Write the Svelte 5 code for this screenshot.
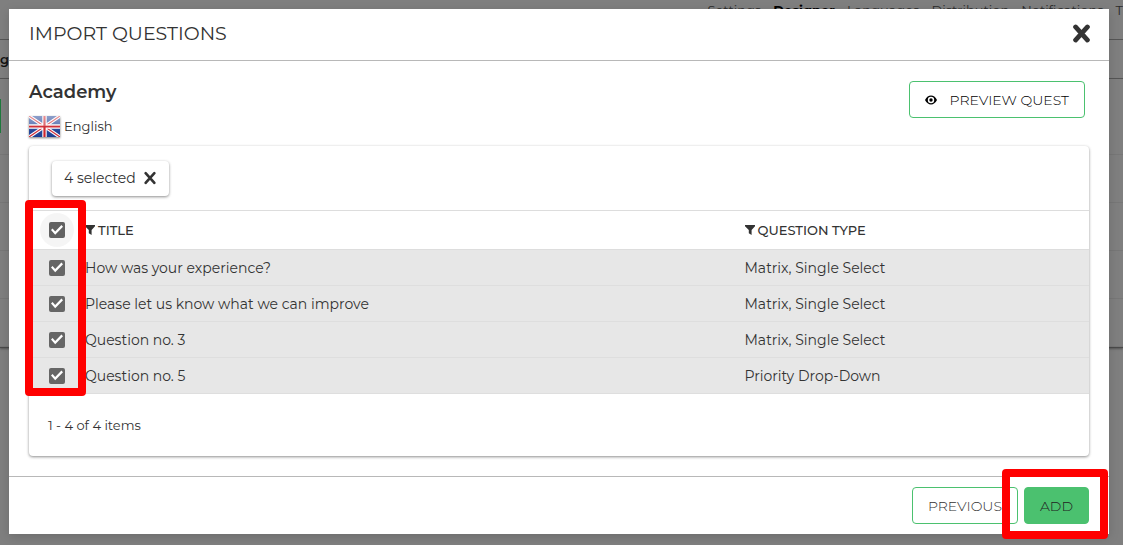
<script>
  const navLinks = ['Settings', 'Designer', 'Languages', 'Distribution', 'Notifications', 'T'];

  let questions = $state([
    { id: 1, title: 'How was your experience?', type: 'Matrix, Single Select', checked: true },
    { id: 2, title: 'Please let us know what we can improve', type: 'Matrix, Single Select', checked: true },
    { id: 3, title: 'Question no. 3', type: 'Matrix, Single Select', checked: true },
    { id: 4, title: 'Question no. 5', type: 'Priority Drop-Down', checked: true }
  ]);

  let selected = $derived(questions.filter((q) => q.checked).length);

  function setAll(checked) {
    questions.forEach((q) => (q.checked = checked));
  }
</script>

{#snippet cross()}
  <svg class="cross" viewBox="0 0 16 16" aria-hidden="true">
    <path d="M3 2.5 L13 13.5 M13 2.5 L3 13.5" />
  </svg>
{/snippet}

{#snippet funnel()}
  <svg class="funnel" viewBox="0 0 10 10" aria-hidden="true">
    <path d="M0 0h10v1.3L6.6 5v5L3.8 8.3V5L0 1.3z" />
  </svg>
{/snippet}

<div class="page">
  <div class="behind" aria-hidden="true">
    <div class="nav">
      {#each navLinks as link}
        <span class:current={link === 'Designer'}>{link}</span>
      {/each}
    </div>
    <div class="subnav">gn</div>
    <div class="panel">
      <div class="panel-head"><i></i></div>
      <div class="panel-row"></div>
      <div class="panel-row"></div>
      <div class="panel-row"></div>
      <div class="panel-row"></div>
    </div>
  </div>

  <div class="overlay">
    <div class="modal" role="dialog" aria-labelledby="modal-title">
      <header>
        <h1 id="modal-title">IMPORT QUESTIONS</h1>
        <button class="close" aria-label="Close">{@render cross()}</button>
      </header>

      <main>
        <div class="intro">
          <div>
            <h2>Academy</h2>
            <div class="language">
              <svg class="flag" viewBox="0 0 31 21" aria-hidden="true">
                <defs>
                  <linearGradient id="shine" x1="0" y1="0" x2="0" y2="1">
                    <stop offset="0" stop-color="#fff" stop-opacity="0.5" />
                    <stop offset="0.5" stop-color="#fff" stop-opacity="0.3" />
                    <stop offset="0.5" stop-color="#fff" stop-opacity="0.08" />
                    <stop offset="1" stop-color="#fff" stop-opacity="0" />
                  </linearGradient>
                </defs>
                <rect width="31" height="21" fill="#1c3f95" />
                <path d="M0 0L31 21M31 0L0 21" stroke="#fff" stroke-width="3.4" />
                <path d="M0 0L31 21M31 0L0 21" stroke="#cf2b36" stroke-width="1.2" />
                <path d="M15.5 0V21M0 10.5H31" stroke="#fff" stroke-width="4.4" />
                <path d="M15.5 0V21M0 10.5H31" stroke="#cc2029" stroke-width="2.2" />
                <rect width="31" height="21" fill="url(#shine)" />
              </svg>
              <span>English</span>
            </div>
          </div>
          <button class="btn preview">
            <svg class="eye" viewBox="0 0 12 10" aria-hidden="true">
              <path d="M0 5C1.5 2 3.6 .6 6 .6S10.5 2 12 5C10.5 8 8.4 9.4 6 9.4S1.5 8 0 5z" />
              <circle cx="6" cy="5" r="3.2" fill="#fff" />
              <circle cx="6" cy="5" r="1.7" />
            </svg>
            PREVIEW QUEST
          </button>
        </div>

        <section class="card">
          <div class="toolbar">
            <button class="chip" onclick={() => setAll(false)}>
              {selected} selected
              {@render cross()}
            </button>
          </div>
          <div class="table-wrap">
            <table>
              <thead>
                <tr>
                  <th class="pick">
                    <input
                      type="checkbox"
                      aria-label="Select all"
                      checked={selected === questions.length}
                      onchange={(e) => setAll(e.currentTarget.checked)}
                    />
                  </th>
                  <th>{@render funnel()}TITLE</th>
                  <th class="type">{@render funnel()}QUESTION TYPE</th>
                </tr>
              </thead>
              <tbody>
                {#each questions as q (q.id)}
                  <tr class:checked={q.checked}>
                    <td class="pick"><input type="checkbox" aria-label={q.title} bind:checked={q.checked} /></td>
                    <td>{q.title}</td>
                    <td>{q.type}</td>
                  </tr>
                {/each}
              </tbody>
            </table>
            <div class="marker rows-marker"></div>
          </div>
          <div class="pager">1 - 4 of 4 items</div>
        </section>
      </main>

      <footer>
        <button class="btn">PREVIOUS</button>
        <div class="add-wrap">
          <button class="btn primary">ADD</button>
          <div class="marker add-marker"></div>
        </div>
      </footer>
    </div>
  </div>
</div>

<style>
  :global(body) {
    background: #fff;
    font-family: Montserrat, Inter, sans-serif;
    font-size: 14px;
    color: #333;
  }
  .page {
    position: relative;
    min-height: 100vh;
    margin-right: 23px;
    background: #7f7f7f;
    overflow: hidden;
  }
  .page * { box-sizing: border-box; }

  .behind { position: absolute; inset: 0; overflow: hidden; }
  .nav {
    height: 40px;
    padding-top: 2px;
    display: flex;
    justify-content: flex-end;
    gap: 12px;
    font-size: 13px;
    line-height: 16px;
    color: #2b2b2b;
    border-bottom: 1px solid #555;
  }
  .nav .current { color: #000; font-weight: 700; }
  .subnav {
    height: 39px;
    font-size: 13px;
    line-height: 38px;
    font-weight: 600;
    color: #111;
    border-bottom: 1px solid #555;
  }
  .panel { border-bottom: 1px solid #4a4a4a; box-shadow: 0 1px 2px #555; }
  .panel-head { height: 76px; padding-top: 20px; border-bottom: 1px solid #777; }
  .panel-head i { display: block; width: 1px; height: 34px; background: #1f7a3d; }
  .panel-row { height: 48px; border-bottom: 1px solid #777; }

  .overlay { position: relative; padding: 9px 14px 11px 9px; }
  .modal { background: #fff; box-shadow: 0 3px 10px rgba(0, 0, 0, 0.15); }

  header {
    display: flex;
    align-items: center;
    justify-content: space-between;
    height: 52px;
    padding: 0 18px 2px 20px;
    border-bottom: 1px solid #b8b8b8;
  }
  h1 { margin: 0; font-size: 19px; line-height: 24px; font-weight: 400; }
  h2 { margin: 0; font-size: 18px; line-height: 22px; font-weight: 600; }
  button { font: inherit; color: inherit; cursor: pointer; }
  .cross { width: 14px; height: 14px; fill: none; stroke: #333; stroke-width: 3; stroke-linecap: round; }
  .close { display: flex; padding: 0; border: 0; background: none; }
  .close .cross { width: 19px; height: 19px; stroke-width: 4; }

  main { padding: 20px; }
  .intro { display: flex; justify-content: space-between; align-items: flex-start; padding-right: 4px; }
  .language { display: flex; align-items: center; gap: 4px; height: 22px; margin: 12px 0 9px; font-size: 13px; }
  .flag { width: 31px; height: 21px; filter: drop-shadow(0 1px 1px rgba(0, 0, 0, 0.5)); }

  .btn {
    display: flex;
    align-items: center;
    justify-content: center;
    height: 37px;
    padding: 0 15px;
    border: 1px solid #4bc16f;
    border-radius: 4px;
    background: #fff;
    font-size: 14px;
    font-weight: 300;
  }
  .preview { gap: 13px; color: #000; }
  .eye { width: 12px; height: 10px; }
  .primary { background: #4bc16f; color: #222; }

  .card {
    border-radius: 4px;
    box-shadow: 0 1px 3px rgba(0, 0, 0, 0.45);
  }
  .toolbar { display: flex; padding: 15px 23px 14px; }
  .chip {
    display: flex;
    align-items: center;
    gap: 7px;
    height: 35px;
    padding: 0 12px 2px;
    border: 0;
    border-radius: 4px;
    background: #fff;
    box-shadow: 0 1px 3px rgba(0, 0, 0, 0.45);
  }

  .table-wrap { position: relative; }
  table { width: 100%; border-collapse: collapse; table-layout: fixed; }
  th, td { padding: 0; text-align: left; }
  th { height: 39px; font-size: 13px; font-weight: 500; border-top: 1px solid #ddd; border-bottom: 1px solid #ddd; }
  td { height: 36px; border-bottom: 1px solid #dedede; }
  tr.checked { background: #e7e7e7; }
  .pick { width: 56px; padding-left: 20px; }
  .type { width: 32.5%; }
  .funnel { width: 10px; height: 10px; margin-right: 3px; fill: #333; }

  input {
    display: block;
    position: relative;
    appearance: none;
    width: 16px;
    height: 16px;
    margin: 0;
    border: 2px solid #666;
    border-radius: 2px;
  }
  input:checked { background: #666; }
  input:checked::after {
    content: '';
    position: absolute;
    inset: 0;
    background: #fff;
    clip-path: polygon(0 50%, 13% 37%, 35% 62%, 87% 8%, 100% 22%, 35% 90%);
  }
  th input::before {
    content: '';
    position: absolute;
    inset: -11px;
    border-radius: 50%;
    background: rgba(0, 0, 0, 0.04);
  }

  .pager { padding: 21px 19px; font-size: 13px; line-height: 20px; }

  footer {
    display: flex;
    justify-content: flex-end;
    gap: 6px;
    padding: 10px 20px;
    border-top: 1px solid #b8b8b8;
  }
  .add-wrap { position: relative; }

  /* red highlight frames */
  .marker { position: absolute; border: 8px solid #f00; border-radius: 4px; pointer-events: none; }
  .rows-marker { left: -4px; top: -10px; bottom: -2px; width: 61px; }
  .add-marker { inset: -18px -19px -15px -22px; }
</style>
